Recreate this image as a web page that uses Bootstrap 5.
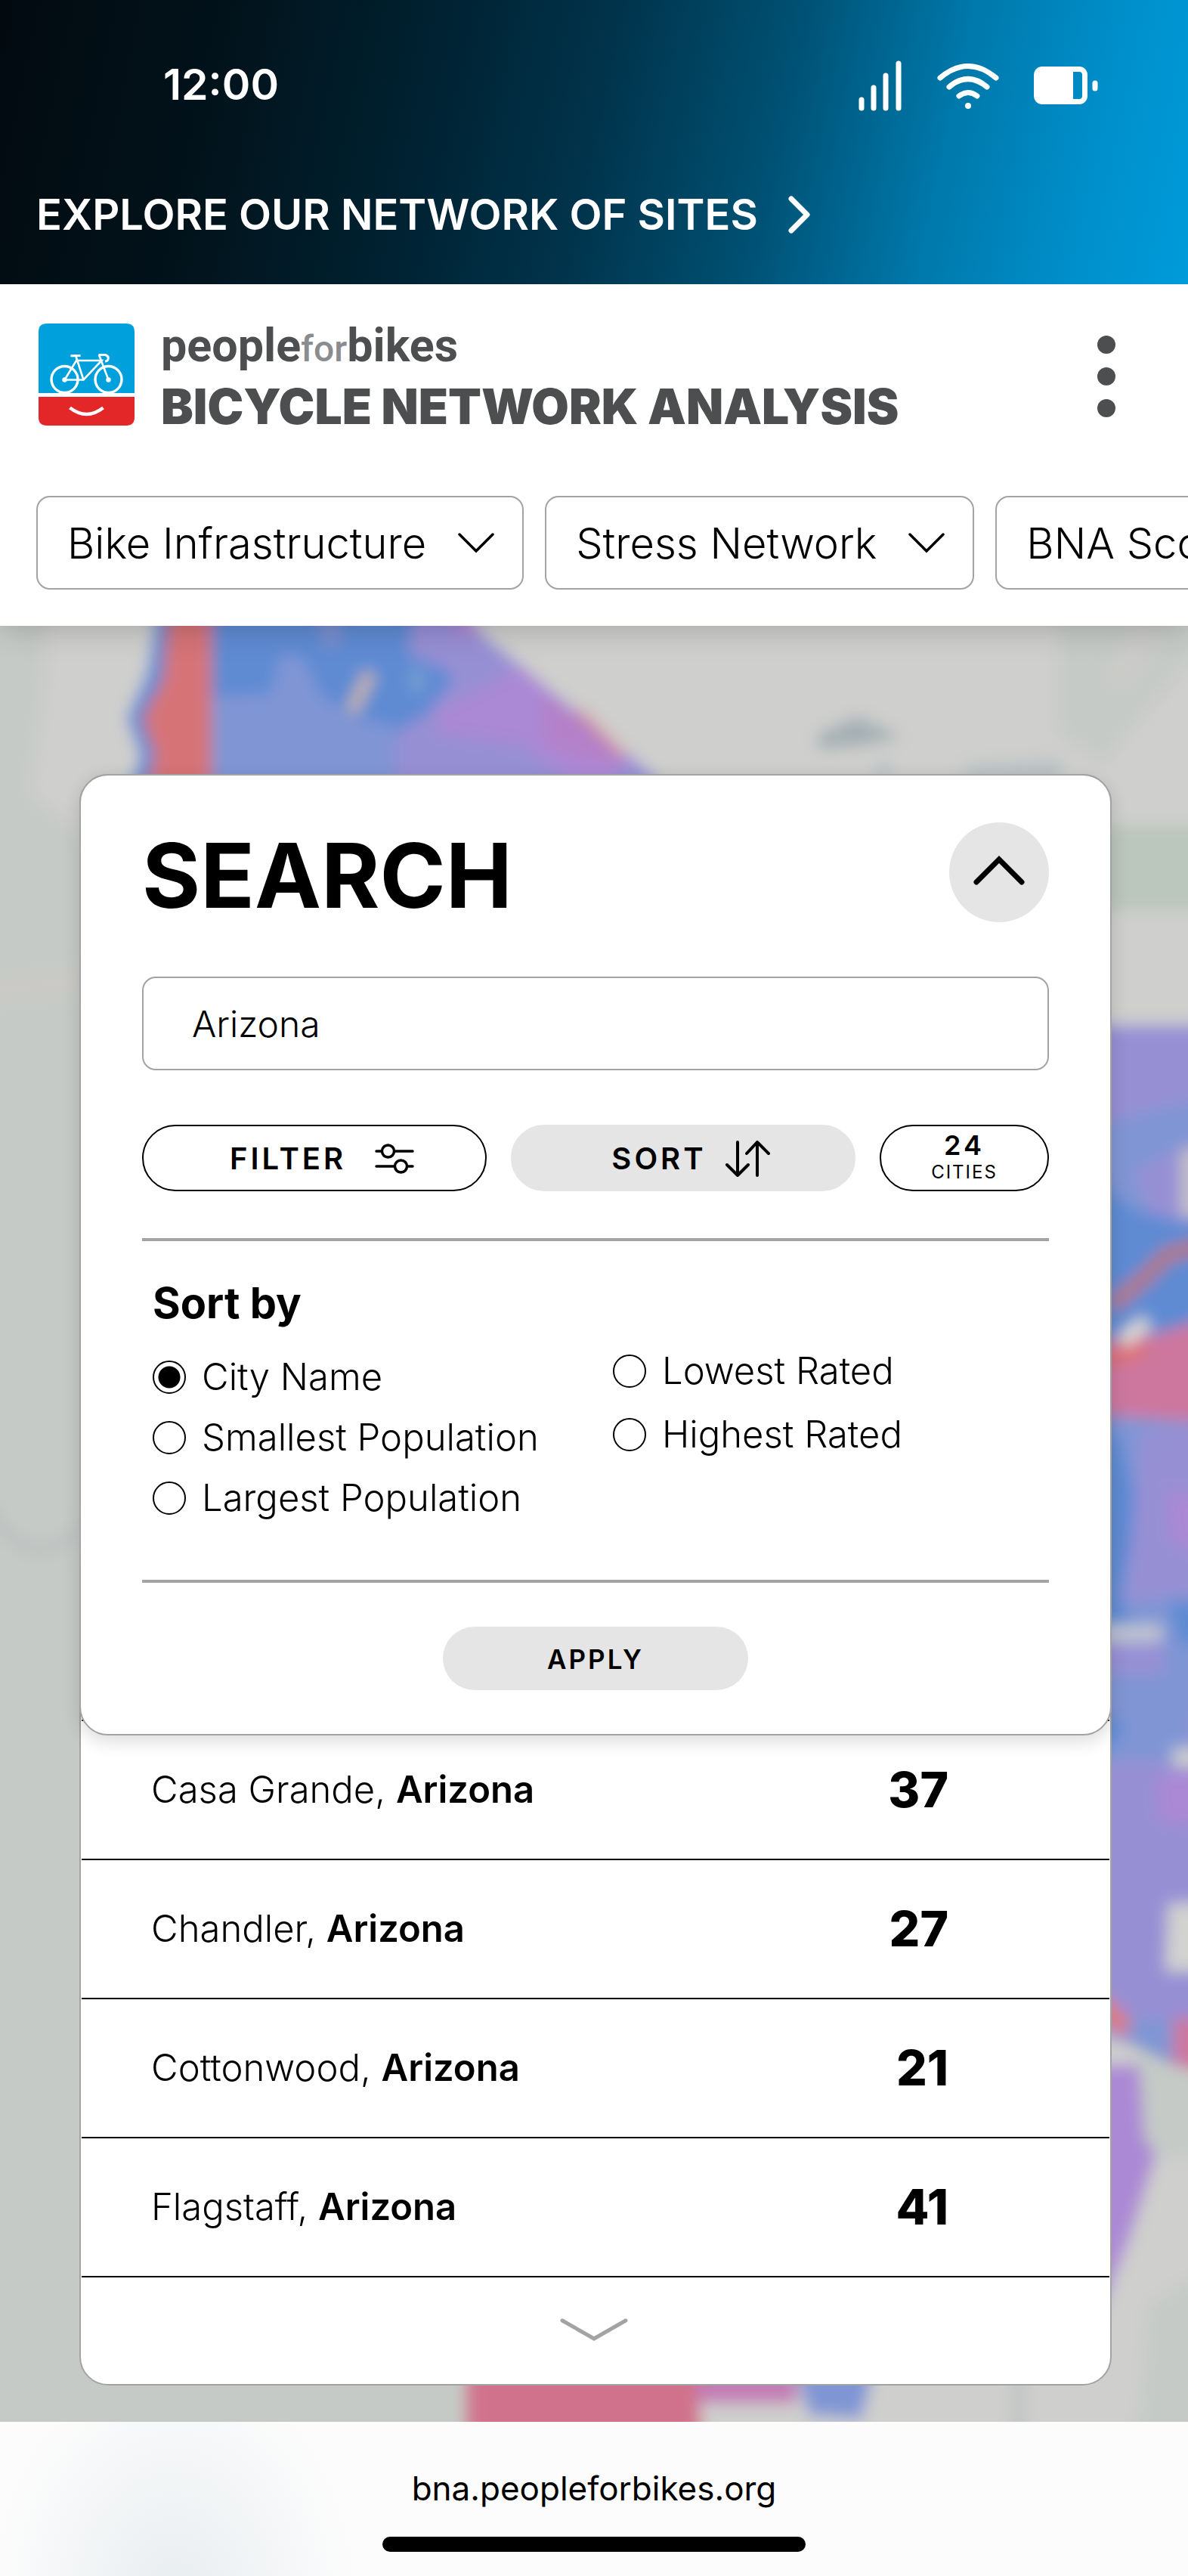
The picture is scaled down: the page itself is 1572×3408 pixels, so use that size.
<!DOCTYPE html>
<html lang="en">
<head>
<meta charset="utf-8">
<meta name="viewport" content="width=device-width, initial-scale=1">
<title>Bicycle Network Analysis</title>
<link href="https://cdn.jsdelivr.net/npm/bootstrap@5.3.0/dist/css/bootstrap.min.css" rel="stylesheet">
<style>
body{font-family:Inter,sans-serif;color:#000;background:#fff;overflow-x:hidden}
button{color:#000}
.top-band{background:linear-gradient(102deg,#020a10 0%,#02121a 18%,#002232 36%,#01344c 50%,#005072 64%,#0078aa 78%,#0090cc 91%,#009bda 100%);height:376px;padding:0 48px}
.status-row{height:224px;padding:0 64px 0 168px}
.clock{font-size:57px;font-weight:600}
.sites-link{font-size:56px;font-weight:600;line-height:68px;color:#fff;text-decoration:none;padding-top:26px;gap:40px}
.site-head{position:relative;z-index:2;background:#fff;box-shadow:0 4px 40px rgba(0,0,0,.2);clip-path:inset(0 0 -60px 0)}
.brand-row{padding:49px 96px 0 50px;height:280px}
.brand-link{gap:34px}
.brand-logo{margin-top:3px}
.brand-a{font-family:Roboto,sans-serif;font-weight:700;font-size:61px;line-height:64px;color:#4d4e50}
.brand-a span{font-weight:500;font-size:48px;color:#8b8c90}
.brand-b{font-weight:900;font-size:64px;line-height:88px;color:#4d4e50}
.menu-btn{border:0;background:none;padding:19px 0 0}
.chip-row{padding:0 0 48px 48px;gap:28px;overflow:hidden}
.chip{flex:none;height:124px;border:2px solid #a3a3a3;border-radius:18px;background:#fff;font-size:56px;font-weight:300;padding:2px 37px 0 39px;gap:42px;white-space:nowrap}
.map-area{position:relative;background:#c6cac6;padding:196px 101px 48px 105px;overflow:hidden}
.map-art{position:absolute;inset:0;width:100%;height:100%}
.panel-wrap{position:relative;background:#fff;border:2px solid #a3a3a3;border-radius:38px}
.search-card{position:relative;z-index:1;margin:-2px;background:#fff;border:2px solid #a3a3a3;border-radius:38px;padding:62px 81px 58px;box-shadow:0 8px 24px rgba(0,0,0,.14)}
.search-title{font-size:118px;font-weight:700;line-height:132px;margin:0;padding-top:4px}
.round-btn{width:132px;height:132px;border-radius:50%;border:0;background:#e5e5e5;padding:0}
.q-input{height:124px;border:2px solid #a3a3a3;border-radius:18px;font-size:48px;font-weight:300;padding:0 64px;color:#000;margin-top:68px}
.pill-row{margin:72px 0 62px;gap:32px}
.pill{flex:1 1 0;height:88px;border-radius:44px;border:2px solid #000;background:#fff;font-size:40px;font-weight:600;letter-spacing:4px;padding:2px 0 0 20px;gap:38px}
.pill-sort{background:#e5e5e5;border-color:#e5e5e5;gap:24px}
.pill-count{flex:0 0 224px;padding:6px 0 0;line-height:1;gap:0}
.pill-count b{font-size:36px;font-weight:600;line-height:38px}
.pill-count span{font-size:24px;font-weight:400;line-height:34px;letter-spacing:2px}
.rule{height:4px;border:0;background:#a3a3a3;opacity:1;margin:0}
.sort-box{border:0;margin:0;padding:46px 12px 68px 14px}
.sort-title{font-size:56px;font-weight:700;line-height:72px;margin:0}
.opts-a{width:609px;padding-top:22px}
.opts-b{padding-top:12px}
.opt{font-size:49px;font-weight:300;gap:21px;height:80px}
.opts-b .opt{height:84px}
.opt input{appearance:none;width:44px;height:44px;margin:0;border:2px solid #000;border-radius:50%;background:#fff}
.opt input:checked{background:radial-gradient(circle,#000 14px,#fff 15px)}
.apply{width:404px;height:84px;border:0;border-radius:42px;background:#e5e5e5;font-size:35px;font-weight:600;letter-spacing:3px;padding:2px 0 0;margin-top:58px}
.city-list{margin:-21px 1px 0;border-top:2px solid #000}
.city{height:184px;border-bottom:2px solid #000;font-size:49px;font-weight:300;padding:0 213px 0 92px;color:#000;text-decoration:none}
.city b{font-weight:600}
.city strong{font-size:64px;font-weight:800}
.more{height:141px;border:0;background:none;width:100%;padding:0 4px 4px 0}
.url-bar{height:204px;background:radial-gradient(ellipse 240px 320px at 230px 240px,#e8edf0,rgba(252,252,252,0)),#fcfcfc;padding-top:55px;gap:31px}
.url-bar a{font-size:44px;line-height:66px;color:#000;text-decoration:none}
.home-bar{width:560px;height:20px;border-radius:10px;background:#000}
</style>
<script src="https://cdn.jsdelivr.net/npm/bootstrap@5.3.0/dist/js/bootstrap.bundle.min.js"></script>
</head>
<body>
<header class="top-band text-white">
  <div class="status-row d-flex align-items-center justify-content-between">
    <span class="clock">12:00</span>
    <svg width="330" height="74" viewBox="0 0 330 74" fill="none" stroke="#fff" stroke-width="7" stroke-linecap="round" aria-hidden="true">
      <path d="M10 57v11M26 41v27M42 25v43M59 9v59"/>
      <path d="M114 28Q151-3 188 28M126 40Q151 19 176 40M139 52Q151 43 163 52"/>
      <circle cx="151" cy="65" r="4" fill="#fff" stroke="none"/>
      <path fill="#fff" stroke="none" fill-rule="evenodd" d="M248 13h50a11 11 0 0 1 11 11v28a11 11 0 0 1-11 11h-50a11 11 0 0 1-10-11V24a11 11 0 0 1 10-11zM290 20v36h8q4 0 4-4V24q0-4-4-4z"/>
      <path d="M319 35v7"/>
    </svg>
  </div>
  <a href="#" class="sites-link d-flex align-items-center">EXPLORE OUR NETWORK OF SITES
    <svg width="30" height="52" viewBox="0 0 30 52" fill="none" stroke="#fff" stroke-width="7" stroke-linecap="round" stroke-linejoin="round" aria-hidden="true"><path d="M4 5l21 21L4 47"/></svg></a>
</header>
<section class="site-head">
  <div class="brand-row d-flex justify-content-between align-items-start">
    <a href="#" class="brand-link d-flex align-items-start text-decoration-none">
      <svg class="brand-logo" width="129" height="135" viewBox="0 0 129 135" aria-hidden="true">
        <path fill="#00a0dd" d="M1 92V11Q1 0 12 0h105q11 0 11 11v81z"/>
        <path fill="#e32627" d="M1 97h127v27q0 11-11 11H12q-11 0-11-11z"/>
        <g fill="none" stroke="#fff" stroke-width="3.4"><circle cx="35.5" cy="74" r="17.5"/><circle cx="93.5" cy="74" r="17.5"/>
        <path stroke-width="2.6" d="M35.5 74.5L51 49H84.5L60.5 74.5H35.5M60.5 74.5L50 42M93.500 74.500L81 41.500"/>
        <path stroke-width="3" d="M43.500 42.500q3 .5 6 0h7M80.500 41.500h9q5 2 3.500 6-1 2.500-4 2.500"/>
        <path stroke-width="4.500" d="M42.500 111.500q22 17 44 0"/></g>
        <circle cx="35.500" cy="74.500" r="3.200" fill="#fff"/><circle cx="93.500" cy="74.500" r="3.200" fill="#fff"/>
      </svg>
      <span class="d-flex flex-column"><span class="brand-a">people<span>for</span>bikes</span><span class="brand-b">BICYCLE NETWORK ANALYSIS</span></span>
    </a>
    <button class="menu-btn" type="button" aria-label="Menu"><svg class="d-block" width="24" height="108" viewBox="0 0 24 108" fill="#4d4e50"><circle cx="12" cy="12" r="12"/><circle cx="12" cy="54" r="12"/><circle cx="12" cy="96" r="12"/></svg></button>
  </div>
  <div class="chip-row d-flex">
    <button type="button" class="chip d-flex align-items-center">Bike Infrastructure<svg width="48" height="28" viewBox="0 0 48 28" fill="none" stroke="#000" stroke-width="3.500" stroke-linecap="round"><path d="M2 2l22 22L46 2"/></svg></button>
    <button type="button" class="chip d-flex align-items-center">Stress Network<svg width="48" height="28" viewBox="0 0 48 28" fill="none" stroke="#000" stroke-width="3.500" stroke-linecap="round"><path d="M2 2l22 22L46 2"/></svg></button>
    <button type="button" class="chip d-flex align-items-center">BNA Score<svg width="48" height="28" viewBox="0 0 48 28" fill="none" stroke="#000" stroke-width="3.500" stroke-linecap="round"><path d="M2 2l22 22L46 2"/></svg></button>
  </div>
</section>
<main class="map-area">
  <svg class="map-art" viewBox="0 828 1572 2376" preserveAspectRatio="none" aria-hidden="true">
    <defs><filter id="soft" x="-5%" y="-5%" width="110%" height="110%"><feGaussianBlur stdDeviation="10"/></filter></defs>
    <g filter="url(#soft)">
      <path fill="#cfcfcd" d="M60 760H1400V970L1460 1010 1500 960 1600 850V1092H1400V1204H1640V1360H1400V1025H120V1110L40 1050 60 900z"/>
      <path fill="#cccbc9" d="M1500 830h40l-50 80-25-10z"/>
      <path fill="#bbc6bc" d="M1440 1092H1640V1204H1440z"/>
      <path fill="#cac9c6" d="M-20 1300l130-20v30l-130 20z"/>
      <path fill="#5f8bd3" d="M215 760H570L625 828 870 1030V1060H165L186 1000 168 950 195 890z"/>
      <path fill="#8095d4" d="M278 922L358 918 372 865 400 870 425 920 440 930 470 950 520 960V1060H278z"/>
      <path fill="#7f90ce" d="M415 800h35v45l-15 20z"/>
      <path fill="#d57377" d="M228 760h52V1060H188L205 1000 188 950 215 900z"/>
      <path fill="#978fd4" d="M555 760H570L625 828 870 1030V1060H522V970L565 945 600 900 590 885 540 865z"/>
      <path fill="#ab89d4" d="M600 780L625 820 640 840 600 840zM575 940L650 905 690 880 835 1010 780 1050 690 985 580 970z"/>
      <path fill="#b481c9" d="M718 920L745 930 835 1005 780 1010 720 985z"/>
      <path stroke="#c6b3ab" stroke-width="17" d="M465 942L490 890"/>
      <path stroke="#78a0d0" stroke-width="16" d="M552 885V915"/>
      <path stroke="#d58c9a" stroke-width="9" d="M765 940L825 1000"/>
      <path fill="#a5b0b4" d="M1080 972l55-25 58 28-50 12-58 5z"/>
      <path fill="#b9c1c3" d="M1275 1012l130-8v30l-130 5zM1160 1005h18v40h-18z"/>
      <path fill="#978fd4" d="M1440 1356H1640V2740L1440 2690z"/>
      <path fill="#8095d4" d="M1440 1490L1600 1450V1500L1500 1550 1640 1900 1572 2330 1440 2330z"/>
      <path fill="#5f8bd3" d="M1440 1550L1500 1600 1560 1615H1640V1900L1500 1860 1440 1900z"/>
      <path fill="#c3bfc8" d="M1562 1520H1640V1610H1562z"/>
      <path fill="#5f8bd3" d="M1440 1880L1480 1900 1510 2000 1480 2110 1500 2150 1440 2165z"/>
      <path fill="#978fd4" d="M1510 1895L1640 1880V2100L1490 2120z"/>
      <path fill="#ab89d4" d="M1545 1970L1640 1990V2070L1550 2040z"/>
      <path fill="#cd779f" d="M1440 1775L1530 1765 1640 1730V1885L1440 1870z"/>
      <path fill="none" stroke="#b57683" stroke-width="20" d="M1470 1728L1515 1690 1545 1660 1620 1640"/>
      <path fill="none" stroke="#e0706f" stroke-width="18" d="M1460 1800L1515 1785"/>
      <path fill="none" stroke="#dcdcd4" stroke-width="20" d="M1484 1775L1518 1748"/>
      <path fill="#978fd4" d="M1450 2170H1540V2215H1450z"/>
      <path fill="none" stroke="#bfc4d0" stroke-width="24" d="M1450 2161H1538"/>
      <path fill="#5f8bd3" d="M1545 2120H1640V2175H1560zM1440 2255L1490 2285 1450 2340z"/>
      <path fill="#ab89d4" d="M1530 2350L1640 2340V2420L1535 2410z"/>
      <path fill="none" stroke="#cfcfcd" stroke-width="24" d="M1552 2325H1640"/>
      <path fill="#d2d2cf" d="M1546 2518H1640V2608H1542z"/>
      <path fill="#c5cac6" d="M1440 2690L1560 2745 1640 2760V3260H1440z"/>
      <path fill="#8095d4" d="M1490 2670H1560V2735L1500 2705z"/>
      <path fill="#cd779f" d="M1552 2670H1640V2755L1552 2730z"/>
      <path fill="none" stroke="#e07a78" stroke-width="24" d="M1450 2645L1490 2685"/>
      <path fill="#cfcfcd" d="M1440 2690L1500 2710V2740H1440zM1530 2855L1640 2850V2980L1520 3050 1510 3200H1130V3140H1440V2950z"/>
      <path fill="#ab89d4" d="M1440 2732H1508L1515 2830 1530 2850 1495 2960 1440 3100z"/>
      <path fill="#cfcfcd" d="M900 3140H1500V3260H900z"/>
      <path fill="#c27db5" d="M900 3100H1055V3180H905z"/>
      <path fill="#d0728b" d="M618 3100H915L935 3260H618z"/>
      <path fill="#8095d4" d="M1045 3100H1165L1140 3200 1070 3195z"/>
      <path stroke="#c1c5c4" stroke-width="20" d="M1348 3140V3230"/>
      <path fill="none" stroke="#bcc1c1" stroke-width="16" d="M-20 1990Q20 2050 50 2050T110 2020"/>
    </g>
  </svg>
  <section class="panel-wrap">
    <form class="search-card" onsubmit="return false">
      <div class="d-flex justify-content-between">
        <h1 class="search-title">SEARCH</h1>
        <button class="round-btn d-flex align-items-center justify-content-center" type="button" aria-label="Collapse"><svg width="68" height="44" viewBox="0 0 68 44" fill="none" stroke="#000" stroke-width="7" stroke-linecap="round"><path d="M4 35L34 5 64 35"/></svg></button>
      </div>
      <input class="q-input w-100 d-block" type="text" value="Arizona" aria-label="Search">
      <div class="pill-row d-flex">
        <button class="pill d-flex align-items-center justify-content-center" type="button">FILTER<svg width="52" height="40" viewBox="0 0 52 40" fill="none" stroke="#000" stroke-width="3.500" stroke-linecap="round"><path d="M2 10h7M26 10h24M2 30h24M43 30h7"/><circle cx="17.500" cy="10" r="8"/><circle cx="34.500" cy="30" r="8"/></svg></button>
        <button class="pill pill-sort d-flex align-items-center justify-content-center" type="button">SORT<svg width="60" height="50" viewBox="0 0 60 50" fill="none" stroke="#000" stroke-width="4" stroke-linecap="round" stroke-linejoin="round"><path d="M17 3v44M3 33l14 14 14-14M43 47V3M29 18L43 3l15 15"/></svg></button>
        <div class="pill pill-count d-flex flex-column align-items-center"><b>24</b><span>CITIES</span></div>
      </div>
      <hr class="rule">
      <fieldset class="sort-box">
        <legend class="sort-title">Sort by</legend>
        <div class="d-flex">
          <div class="opts-a">
            <label class="opt d-flex align-items-center"><input type="radio" name="sort" checked>City Name</label>
            <label class="opt d-flex align-items-center"><input type="radio" name="sort">Smallest Population</label>
            <label class="opt d-flex align-items-center"><input type="radio" name="sort">Largest Population</label>
          </div>
          <div class="opts-b">
            <label class="opt d-flex align-items-center"><input type="radio" name="sort">Lowest Rated</label>
            <label class="opt d-flex align-items-center"><input type="radio" name="sort">Highest Rated</label>
          </div>
        </div>
      </fieldset>
      <hr class="rule">
      <button class="apply d-block mx-auto" type="submit">APPLY</button>
    </form>
    <div class="city-list">
      <a href="#" class="city d-flex align-items-center justify-content-between"><span>Casa Grande, <b>Arizona</b></span><strong>37</strong></a>
      <a href="#" class="city d-flex align-items-center justify-content-between"><span>Chandler, <b>Arizona</b></span><strong>27</strong></a>
      <a href="#" class="city d-flex align-items-center justify-content-between"><span>Cottonwood, <b>Arizona</b></span><strong>21</strong></a>
      <a href="#" class="city d-flex align-items-center justify-content-between"><span>Flagstaff, <b>Arizona</b></span><strong>41</strong></a>
    </div>
    <button class="more d-flex align-items-center justify-content-center" type="button" aria-label="Show more"><svg width="90" height="32" viewBox="0 0 90 32" fill="none" stroke="#a3a3a3" stroke-width="5" stroke-linecap="round"><path d="M3 4l42 24L87 4"/></svg></button>
  </section>
</main>
<footer class="url-bar d-flex flex-column align-items-center">
  <a href="#">bna.peopleforbikes.org</a>
  <div class="home-bar"></div>
</footer>
</body>
</html>
